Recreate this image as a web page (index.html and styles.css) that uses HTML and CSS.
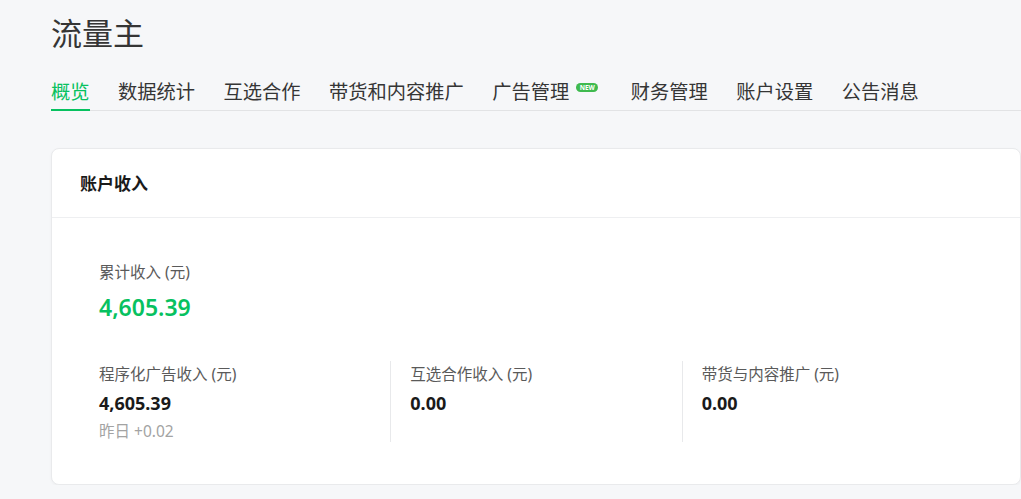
FILE: index.html
```html
<!DOCTYPE html>
<html lang="zh-CN">
<head>
<meta charset="utf-8">
<title>流量主</title>
<link rel="stylesheet" href="styles.css">
</head>
<body>
<div class="page">
  <h1 class="title">流量主</h1>
  <nav class="tabs">
    <a class="tab active">概览</a>
    <a class="tab">数据统计</a>
    <a class="tab">互选合作</a>
    <a class="tab">带货和内容推广</a>
    <a class="tab">广告管理<span class="badge">NEW</span></a>
    <a class="tab">财务管理</a>
    <a class="tab">账户设置</a>
    <a class="tab">公告消息</a>
  </nav>
  <section class="card">
    <div class="card-head">账户收入</div>
    <div class="card-body">
      <div class="total">
        <div class="label">累计收入 (元)</div>
        <div class="total-value">4,605.39</div>
      </div>
      <div class="cols">
        <div class="col">
          <div class="col-label">程序化广告收入 (元)</div>
          <div class="col-value">4,605.39</div>
          <div class="col-sub">昨日 +0.02</div>
        </div>
        <div class="col">
          <div class="col-label">互选合作收入 (元)</div>
          <div class="col-value">0.00</div>
        </div>
        <div class="col">
          <div class="col-label">带货与内容推广 (元)</div>
          <div class="col-value">0.00</div>
        </div>
      </div>
    </div>
  </section>
</div>
</body>
</html>
```

FILE: styles.css
```css
html, body {
  margin: 0;
  padding: 0;
  background: #f6f7f9;
  font-family: "Noto Sans", "Noto Sans CJK SC", sans-serif;
  color: #333;
}

.page {
  width: 970px;
  margin-left: 51px;
  padding-top: 13px;
}

.title {
  margin: 0;
  font-size: 31px;
  line-height: 40px;
  font-weight: 400;
  color: #353535;
}

.tabs {
  display: flex;
  align-items: flex-end;
  gap: 28.5px;
  margin-top: 25px;
  border-bottom: 1px solid #e2e3e5;
}

.tab {
  display: flex;
  align-items: center;
  font-size: 19.25px;
  line-height: 27px;
  padding-bottom: 4px;
  border-bottom: 2px solid transparent;
  margin-bottom: -1px;
  color: #353535;
  cursor: pointer;
}

.tab.active {
  color: #07c160;
  border-bottom-color: #07c160;
}

.badge {
  display: inline-block;
  width: 22px;
  height: 9px;
  margin: 5px 4px 0 7px;
  align-self: flex-start;
  border-radius: 5px;
  background: #3fba4f;
  color: #fff;
  font-size: 6.5px;
  line-height: 9px;
  font-weight: 700;
  text-align: center;
}

.card {
  margin-top: 37px;
  background: #fff;
  border: 1px solid #e9eaec;
  border-radius: 8px;
  box-shadow: 0 1px 3px rgba(0, 0, 0, 0.04);
}

.card-head {
  padding: 23px 28px 21px;
  font-size: 17px;
  line-height: 24px;
  font-weight: 700;
  color: #1a1a1a;
  border-bottom: 1px solid #eeeff1;
}

.card-body {
  padding: 43px 47px 42px;
}

.label {
  font-size: 15.5px;
  line-height: 22px;
  color: #5a5a5a;
}

.total-value {
  margin-top: 9px;
  font-size: 23px;
  line-height: 30px;
  font-weight: 600;
  color: #07c160;
}

.cols {
  display: grid;
  grid-template-columns: 1fr 1fr 1fr;
  margin-top: 39px;
}

.col + .col {
  border-left: 1px solid #e8e9eb;
  padding-left: 19px;
}

.col-label {
  font-size: 15.5px;
  line-height: 26px;
  color: #5a5a5a;
}

.col-value {
  margin-top: 4px;
  font-size: 18px;
  line-height: 24px;
  font-weight: 700;
  color: #1a1a1a;
}

.col-sub {
  margin-top: 5px;
  font-size: 15.5px;
  line-height: 22px;
  color: #a3a3a3;
}
```
